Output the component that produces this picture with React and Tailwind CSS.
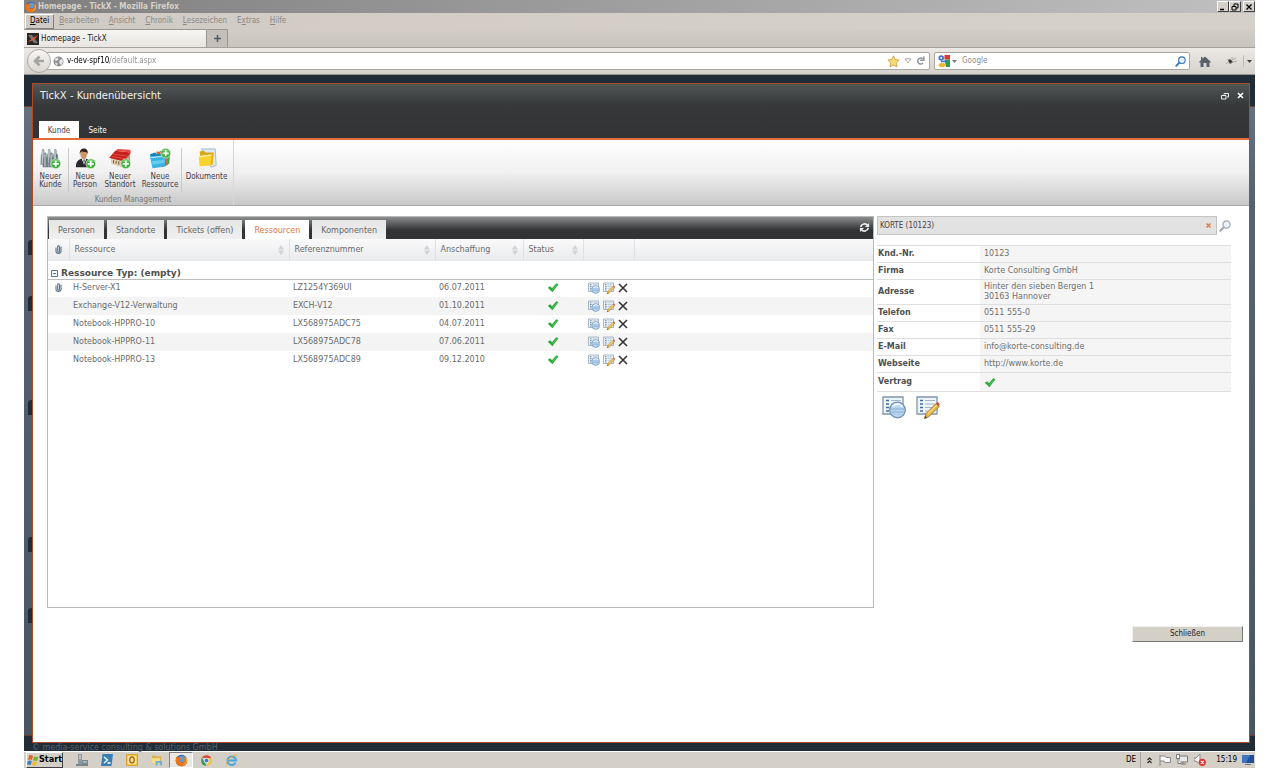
import { useState } from 'react';

const sans = "font-['DejaVu_Sans',sans-serif]";
const condensed = "font-['DejaVu_Sans_Condensed','DejaVu_Sans',sans-serif]";

const menuItems = [
  ['', 'D', 'atei'],
  ['', 'B', 'earbeiten'],
  ['', 'A', 'nsicht'],
  ['', 'C', 'hronik'],
  ['', 'L', 'esezeichen'],
  ['E', 'x', 'tras'],
  ['', 'H', 'ilfe'],
];

const tabs = ['Personen', 'Standorte', 'Tickets (offen)', 'Ressourcen', 'Komponenten'];

const ressourcen = [
  { name: 'H-Server-X1', ref: 'LZ1254Y369UI', datum: '06.07.2011', anhang: true },
  { name: 'Exchange-V12-Verwaltung', ref: 'EXCH-V12', datum: '01.10.2011' },
  { name: 'Notebook-HPPRO-10', ref: 'LX568975ADC75', datum: '04.07.2011' },
  { name: 'Notebook-HPPRO-11', ref: 'LX568975ADC78', datum: '07.06.2011' },
  { name: 'Notebook-HPPRO-13', ref: 'LX568975ADC89', datum: '09.12.2010' },
];

const kunde = [
  ['Knd.-Nr.', '10123'],
  ['Firma', 'Korte Consulting GmbH'],
  ['Adresse', 'Hinter den sieben Bergen 1\n30163 Hannover'],
  ['Telefon', '0511 555-0'],
  ['Fax', '0511 555-29'],
  ['E-Mail', 'info@korte-consulting.de'],
  ['Webseite', 'http://www.korte.de'],
];

function Firefox({ className }) {
  return (
    <svg className={className} viewBox="0 0 16 16">
      <circle cx="8" cy="8" r="7" fill="#2a5ca8" />
      <circle cx="8.5" cy="6" r="4" fill="#5b9be0" />
      <path d="M1.5 3.5 3 4.6C4 3.4 5 3 6.3 3.2 5.4 4 5.6 4.8 6.8 5.2c1.2.3 1.6.8.2 1.6-1 .6-1.4 1.4-.6 2.5 1.4 1.8 4.6 1.2 5.2-1.2.4-2-.2-3.7-1.3-4.9 3 .5 4.5 2.6 4.7 5.2C15 12.2 12 15.3 8 15.3 3.8 15.3.8 12.3.8 8.5c0-2 .2-3.5.7-5z" fill="#e8741c" />
      <path d="M12 3c2.3 1.2 3.2 4 2.3 6.5-.9 2.5-3 4-5.5 4.2 3-1.2 4.8-3 4.8-6 0-1.8-.6-3.4-1.6-4.7z" fill="#f9c440" />
    </svg>
  );
}

function PlusBadge() {
  return (
    <g>
      <circle cx="18" cy="18" r="5.5" fill="#38ad38" stroke="#d6f0d0" strokeWidth=".8" />
      <path d="M14 16a4.5 4.5 0 0 1 8 0z" fill="#79d06f" />
      <path d="M18 14.5v7M14.5 18h7" stroke="#fff" strokeWidth="2" />
    </g>
  );
}

function KundeIcon() {
  return (
    <svg className="h-[21px] w-[21px]" viewBox="0 0 24 24">
      {[0, 7, 14].map((x) => (
        <g key={x} transform={`translate(${x} 0)`}>
          <path d="m1 8 1-2V2.5Q3.5-.5 5 2.5V6l1.5 2 1 11h-7z" fill="#87969b" />
          <path d="M3.2 2.5V18" stroke="#d3dde0" strokeWidth="1.2" />
          <path d="M5.2 7v11" stroke="#56656a" strokeWidth="1" />
        </g>
      ))}
      {[2.5, 9.5].map((x) => (
        <g key={x} transform={`translate(${x} 4)`}>
          <path d="m1 8 1-2V2.5Q3.5-.5 5 2.5V6l1.5 2 1 10h-7z" fill="#6f7e83" />
          <path d="M3.2 2.5V17" stroke="#cbd7da" strokeWidth="1.2" />
        </g>
      ))}
      <PlusBadge />
    </svg>
  );
}

function PersonIcon() {
  return (
    <svg className="h-[21px] w-[21px]" viewBox="0 0 24 24">
      <path d="M1 22c0-6 2-8.5 7-10h4c5 1.5 7.5 4 7.5 10z" fill="#25282c" />
      <path d="m7.5 12 2.8 7 2.7-7z" fill="#f2f2f2" />
      <path d="m9.5 13 .8 6 .9-6z" fill="#444" />
      <ellipse cx="10" cy="7" rx="3.8" ry="5.5" fill="#cf9766" />
      <path d="M5.5 7C5 2.5 7.5.5 10.5.5S15 3 14.5 7C13.5 4 11 5 8 4 6.5 4.3 6 5.5 5.5 7z" fill="#33211a" />
      <PlusBadge />
    </svg>
  );
}

function StandortIcon() {
  return (
    <svg className="h-[21px] w-[23px]" viewBox="0 0 26 24">
      <path d="m2 11 1 7 13 4 8-7V7z" fill="#b9a183" />
      <path d="m2 12 14 3v7L3 18z" fill="#e3d0b2" />
      <path d="M5 14v3.5m3-3v3.5m3-3v4m3-4v4" stroke="#79603f" strokeWidth="1.2" />
      <path d="M0 11 7 3l18 2-8 10z" fill="#c91e1d" />
      <path d="m7 3 3-2 14 1 1 3z" fill="#e84a42" />
      <path d="m5 7 17 2.5M3 9.5 19 12.5" stroke="#e2524a" strokeWidth="1" />
      <g transform="translate(1 0)"><PlusBadge /></g>
    </svg>
  );
}

function RessourceIcon() {
  return (
    <svg className="h-[21px] w-[22px]" viewBox="0 0 25 24">
      <path d="m12 3 12 2-1 13-8 4z" fill="#3fa255" />
      <path d="m8 4 13 1 .5 14-7 3z" fill="#dd6b33" />
      <path d="m1 7 6-2 2 2 10-1 .5 14L5 22.5z" fill="#1686bc" />
      <path d="m1 10 18-2-.5 13L4 23z" fill="#38b3e2" />
      <path d="m2 11 16-1.8" stroke="#b4eaff" strokeWidth="1.2" />
      <path d="m3 15 15-2-.3 4L4 19z" fill="#62cdf0" />
      <g transform="translate(1 -12)"><PlusBadge /></g>
    </svg>
  );
}

function DokumenteIcon() {
  return (
    <svg className="h-[21px] w-[20px]" viewBox="0 0 23 24">
      <path d="M5 1h16l1 19-6 2z" fill="#dce8f2" stroke="#9fb6c8" />
      <path d="m3 4 5-1 2 2h9l-1 14-13 1z" fill="#d8a61c" />
      <path d="m2 9 15-2-1 13-13 1z" fill="#fbd12f" />
      <path d="m2.5 10 14-2" stroke="#fff1a3" strokeWidth="1.5" />
      <path d="m17 7 2-1-1 13-2 1z" fill="#e7b31f" />
    </svg>
  );
}

function Haken() {
  return (
    <svg className="inline-block h-[11px] w-[12px]" viewBox="0 0 12 11" role="img" aria-label="Ja">
      <path d="m.8 5.8 2.4-1.6L5 6.2 9.3 1.3l2.2 1L5.4 10.2z" fill="#2aa838" />
      <path d="M5 8.3 10.3 2.5" stroke="#62cf68" strokeWidth=".8" />
    </svg>
  );
}

function Clip() {
  return (
    <svg className="inline-block h-[9px] w-[7px]" viewBox="0 0 7 9">
      <path d="M1 2.5v4C1 9 6 9 6 6.5V1.5M4.5 2v4.2c0 1-1.8 1-1.8 0V1.8C2.7.6 4.5.6 4.5 1.8" fill="none" stroke="#59718c" strokeWidth="1.1" />
    </svg>
  );
}

function ListeAnsicht({ className }) {
  return (
    <svg className={className} viewBox="0 0 24 24">
      <path d="M1 2h20v17H1z" fill="#eef5fb" stroke="#8095aa" strokeWidth="1.3" />
      <path d="M4 5.5h3M4 9h3M4 12.5h3M4 16h3" stroke="#416d9d" strokeWidth="1.6" />
      <path d="M9 5.5h10M9 9h10M9 12.5h4" stroke="#a4b5c6" strokeWidth="1.2" />
      <circle cx="15.5" cy="15" r="7.8" fill="#b4d3ef" fillOpacity=".94" stroke="#7391b2" strokeWidth="1.3" />
      <path d="M9 14h13M9.5 17h12" stroke="#86aed4" strokeWidth="1.2" />
      <path d="M10.5 11.5q5-5 10 0" fill="none" stroke="#f3faff" strokeWidth="1.8" />
    </svg>
  );
}

function ListeBearbeiten({ className }) {
  return (
    <svg className={className} viewBox="0 0 24 24">
      <path d="M1 2h20v17H1z" fill="#eef5fb" stroke="#8095aa" strokeWidth="1.3" />
      <path d="M4 5.5h3M4 9h3M4 12.5h3M4 16h3" stroke="#416d9d" strokeWidth="1.6" />
      <path d="M9 5.5h10M9 9h10M9 12.5h7M9 16h3" stroke="#a4b5c6" strokeWidth="1.2" />
      <path d="m8.5 23.5 1.5-5L20 8.5l3.3 3L13 21.5z" fill="#e8b94b" stroke="#9d762f" strokeWidth=".9" />
      <path d="m20 8.5 1.2-1.2q2-.5 2.5 2.5l-1 1.5z" fill="#c94b46" />
      <path d="m8.5 23.5.7-2.5 1.8 1.8z" fill="#333" />
      <path d="m12 18.5 8.5-8" stroke="#fff0aa" />
    </svg>
  );
}

function Sort() {
  return (
    <svg className="h-[10px] w-[6px] shrink-0" viewBox="0 0 6 10">
      <path d="m3 0 3 4.5H0zM0 5.5h6L3 10z" fill="#d2d3d5" />
    </svg>
  );
}

function Lupe({ className, color }) {
  return (
    <svg className={className} viewBox="0 0 12 12" fill="none" stroke={color}>
      <circle cx="7.5" cy="4.5" r="3.6" strokeWidth="1.2" fill="#eaf1fa" />
      <path d="M4.8 7.2 1.3 10.7" strokeWidth="2" strokeLinecap="round" />
    </svg>
  );
}

function WinButton({ label, children }) {
  return (
    <button aria-label={label} className="flex h-[11px] w-[12px] items-center justify-center border border-t-white border-l-white border-r-[#404040] border-b-[#404040] bg-[#d4d0c8]">
      <svg className="h-[8px] w-[8px] shrink-0" viewBox="0 0 8 8" fill="none" stroke="#000">{children}</svg>
    </button>
  );
}

function BrowserChrome() {
  return (
    <header className={`${condensed} shrink-0 text-[8px] leading-[10px]`}>
      <div className="flex h-[13px] items-center bg-linear-to-r from-[#808080] to-[#c0c0c0] pl-px">
        <Firefox className="h-[12px] w-[12px]" />
        <span className="ml-px flex-1 font-bold text-[#d6d2ca]">Homepage - TickX - Mozilla Firefox</span>
        <WinButton label="Minimieren"><path d="M1 6.5h4" strokeWidth="1.5" /></WinButton>
        <WinButton label="Wiederherstellen"><path d="M3 3V1h4v4H5M1 3.5h4V7H1z" /></WinButton>
        <span className="w-[2px]" />
        <WinButton label="Schließen"><path d="m1.5 1.5 5 5m0-5-5 5" strokeWidth="1.3" /></WinButton>
      </div>
      <nav className="flex h-[16px] items-center bg-linear-to-r from-[#d1cbc5] to-[#d5d1c8] pl-px">
        {menuItems.map(([pre, key, post], i) => (
          <button key={key} className={i === 0 ? 'h-[15px] border border-t-white border-l-white border-r-[#808080] border-b-[#808080] px-1 text-black' : 'px-[5px] text-[#8b8782]'}>
            {pre}<u>{key}</u>{post}
          </button>
        ))}
      </nav>
      <div className="flex h-[19px] items-end border-b border-[#a5a29c] bg-linear-to-b from-[#d2cdc6] to-[#c9c5be]">
        <button className="flex h-[18px] w-[183px] items-center gap-[2px] rounded-tr-[2px] border-t border-r border-[#98958f] bg-linear-to-b from-[#f7f6f4] to-[#e8e5e2] pl-[3px] text-[#222]">
          <svg className="h-[12px] w-[12px]" viewBox="0 0 12 12">
            <path d="M0 0h12v12H0z" fill="#292624" />
            <path d="M1 2h4l6 8H7zM10 1 1 11l4-5z" fill="#747474" />
            <path d="M1 9 6 5 11 2 7 7z" fill="#e15c2f" />
          </svg>
          Homepage - TickX
        </button>
        <button aria-label="Neuer Tab" className="flex h-[18px] w-[21px] items-center justify-center rounded-tr-[2px] border-t border-r border-[#98958f] bg-[#c4c0b9]">
          <svg className="h-[9px] w-[9px]" viewBox="0 0 9 9"><path d="M4.5 1v7M1 4.5h7" stroke="#4e5a65" strokeWidth="1.5" /></svg>
        </button>
      </div>
      <div className="flex h-[27px] items-center border-b border-[#989590] bg-linear-to-b from-[#ece9e6] to-[#d5d1cb] pr-[3px] pl-[3px]">
        <button aria-label="Zurück" className="z-10 flex h-[24px] w-[24px] shrink-0 items-center justify-center rounded-full border border-[#aba8a4] bg-linear-to-b from-[#f7f6f4] to-[#dad7d2]">
          <svg className="h-[12px] w-[12px]" viewBox="0 0 12 12"><path d="M6.5 1.5 2 6l4.5 4.5M2.5 6H11" fill="none" stroke="#a5a4a2" strokeWidth="2.5" /></svg>
        </button>
        <div className="-ml-[5px] flex h-[18px] flex-1 items-center rounded-[2px] border border-[#a9a6a2] bg-white pr-1 pl-[6px]">
          <svg className="h-[11px] w-[11px]" viewBox="0 0 12 12">
            <circle cx="6" cy="6" r="5.5" fill="#929292" />
            <path d="m2 3 3-1.5 1 2-2 2-2-1zM7 5l3-2 1 3-2 4-2-2zM2 7l3 1-1 3z" fill="#e6e6e6" />
          </svg>
          {/* Hostname dunkel, Pfad grau */}
          <input
            aria-label="Adresse"
            defaultValue="v-dev-spf10/default.aspx"
            className="ml-[3px] min-w-0 flex-1 bg-linear-to-r from-black from-[43px] to-[#8c8c8c] to-[43px] bg-clip-text text-transparent outline-none"
          />
          <button aria-label="Lesezeichen">
            <svg className="h-[13px] w-[13px]" viewBox="0 0 24 24"><path d="m12 1.5 3.2 6.9 7.3.9-5.4 5.2 1.4 7.5-6.5-3.6L5.5 22l1.4-7.5L1.5 9.3l7.3-.9z" fill="#fbdc72" stroke="#c89a3c" strokeWidth="1.5" /></svg>
          </button>
          <svg className="mx-[4px] h-[6px] w-[8px]" viewBox="0 0 8 6"><path d="M1 .8h6L4 5z" fill="none" stroke="#aaa" /></svg>
          <button aria-label="Neu laden">
            <svg className="h-[10px] w-[9px]" viewBox="0 0 12 12"><path d="M9.5 8.5A4 4 0 1 1 9 3M10.5 0v5h-5" fill="none" stroke="#8e959d" strokeWidth="2" /></svg>
          </button>
        </div>
        <div className="ml-[4px] flex h-[18px] w-[256px] items-center rounded-[2px] border border-[#a9a6a2] bg-white pr-[3px] pl-[3px]">
          <svg className="h-[12px] w-[12px] shrink-0" viewBox="0 0 12 12">
            <path d="M6.5 0H12v4.500H6.5z" fill="#e1352d" />
            <path d="M6.5 4.5H12V12H8z" fill="#30985a" />
            <circle cx="3.2" cy="3" r="2.8" fill="#3975d1" />
            <circle cx="3.2" cy="3" r="1" fill="#fff" />
            <ellipse cx="4" cy="10" rx="3.5" ry="2" fill="#edb82a" />
            <path d="M3 6.5h4" stroke="#3975d1" strokeWidth="1.5" />
          </svg>
          <svg className="mx-[2px] h-[3px] w-[5px]" viewBox="0 0 5 3"><path d="M0 0h5L2.5 3z" fill="#777" /></svg>
          <input aria-label="Google-Suche" placeholder="Google" className="ml-[3px] min-w-0 flex-1 outline-none placeholder:text-[#8c8c8c]" />
          <button aria-label="Suchen"><Lupe className="h-[11px] w-[11px]" color="#3774bc" /></button>
        </div>
        <button aria-label="Startseite" className="ml-[9px]">
          <svg className="h-[11px] w-[12px]" viewBox="0 0 12 11"><path d="m6 .5 6 5.5-1 .8L10.5 6v5h-3V7h-3v4h-3V6L1 6.800 0 6l2-2V1h1.500v1.700z" fill="#59626b" /></svg>
        </button>
        <button aria-label="Erweiterung" className="ml-[15px]">
          <svg className="h-[10px] w-[12px]" viewBox="0 0 12 10"><path d="M2 3.5 5 4l2 2-3 2-1-2zM6 4l4-2M7 6l4-1M2 6 0 8M6 3V1" fill="#444" stroke="#999" strokeWidth=".8" /><circle cx="4" cy="5" r="1.5" fill="#333" /></svg>
        </button>
        <span className="ml-[5px] h-[12px] w-px bg-[#c1beb9]" />
        <svg className="ml-[3px] h-[3px] w-[5px]" viewBox="0 0 5 3"><path d="M0 0h5L2.5 3z" fill="#444" /></svg>
      </div>
    </header>
  );
}

function RibbonButton({ icon, lines, className }) {
  return (
    <button className={`${className} flex flex-col items-center`}>
      {icon}
      {lines.map((l, i) => <span key={l} className={i === 0 ? 'mt-[4px]' : ''}>{l}</span>)}
    </button>
  );
}

function DialogHeader() {
  return (
    <div className="shrink-0">
      <div className="flex h-[54px] flex-col justify-between bg-linear-to-b from-[#525657] via-[#363839] via-40% to-[#323335]">
        <div className="flex items-center pt-[5px] pr-[5px] pl-[7px]">
          <h1 className="flex-1 text-[10px] leading-[13px] text-[#f0f0f0]">TickX - Kundenübersicht</h1>
          <button aria-label="Wiederherstellen" className="mr-[8px]">
            <svg className="h-[8px] w-[8px]" viewBox="0 0 8 8" fill="none" stroke="#eee"><path d="M3 2.5v-1h4.5v3.5H6M.5 3.5H5V7H.5z" /></svg>
          </button>
          <button aria-label="Dialog schließen">
            <svg className="h-[7px] w-[7px]" viewBox="0 0 7 7"><path d="m1 1 5 5m0-5L1 6" stroke="#fff" strokeWidth="1.6" /></svg>
          </button>
        </div>
        <div className={`${condensed} flex text-[8px]`}>
          <button className="ml-[6px] h-[17px] w-[40px] bg-white pt-[2px] text-[#433d48]">Kunde</button>
          <button className="h-[17px] w-[37px] pt-[2px] text-white">Seite</button>
        </div>
      </div>
      <div className={`${condensed} flex h-[68px] border-t-2 border-b border-t-[#e16c38] border-b-[#a9a9a9] bg-linear-to-b from-white via-[#f0f0f0] via-50% to-[#c9c9c9] text-[8px] leading-[8px] text-[#443d49]`}>
        <div className="flex w-[201px] flex-col border-r border-[#d8d8d8] pt-[8px]">
          <div className="flex h-[47px]">
            <RibbonButton className="w-[35px]" icon={<KundeIcon />} lines={['Neuer', 'Kunde']} />
            <span className="h-[44px] w-px bg-[#c9c9c9]" />
            <RibbonButton className="w-[32px]" icon={<PersonIcon />} lines={['Neue', 'Person']} />
            <RibbonButton className="w-[38px]" icon={<StandortIcon />} lines={['Neuer', 'Standort']} />
            <RibbonButton className="w-[42px]" icon={<RessourceIcon />} lines={['Neue', 'Ressource']} />
            <span className="h-[44px] w-px bg-[#c9c9c9]" />
            <RibbonButton className="w-[49px]" icon={<DokumenteIcon />} lines={['Dokumente']} />
          </div>
          <p className="text-center leading-[10px] text-[#777]">Kunden Management</p>
        </div>
      </div>
    </div>
  );
}

function Kopf({ children }) {
  return (
    <th className="border-r border-[#dfe0e2] pr-[5px] pl-[5px] font-normal">
      <div className="flex items-center justify-between">{children}<Sort /></div>
    </th>
  );
}

function RessourcenPanel() {
  const [active, setActive] = useState('Ressourcen');
  return (
    <section className="flex min-w-0 flex-1 flex-col border border-[#b9b9b9]">
      <div className="flex h-[22px] shrink-0 items-end bg-linear-to-b from-[#8d8f8f] to-[#323335] to-60% pl-px">
        {tabs.map((tab) => (
          <button key={tab} onClick={() => setActive(tab)} className={`mr-[3px] h-[19px] px-[9px] pt-[3px] text-[8px] ${tab === active ? 'bg-white text-[#e0763f]' : 'bg-linear-to-b from-[#e5e5e5] to-[#f0f0f0] text-[#666]'}`}>
            {tab}
          </button>
        ))}
        <button aria-label="Aktualisieren" className="mr-[3px] mb-[6px] ml-auto">
          <svg className="h-[11px] w-[11px]" viewBox="0 0 12 12"><path d="M1.8 5.5A4.300 4.300 0 0 1 9.500 3.800M10.200 6.500A4.300 4.300 0 0 1 2.500 8.200" fill="none" stroke="#eee" strokeWidth="1.8" /><path d="M11 1v4.500H6.500zM1 11V6.500h4.500z" fill="#eee" /></svg>
        </button>
      </div>
      <table className="w-full table-fixed border-collapse text-left text-[8px] text-[#6b6b6b]">
        <colgroup>
          <col className="w-[21px]" />
          <col className="w-[220px]" />
          <col className="w-[146px]" />
          <col className="w-[88px]" />
          <col className="w-[60px]" />
          <col className="w-[51px]" />
          <col />
        </colgroup>
        <thead>
          <tr className="h-[22px] bg-linear-to-b from-[#fafafb] to-[#e9eaec]">
            <th className="border-r border-[#dfe0e2] text-center"><Clip /></th>
            <Kopf>Ressource</Kopf>
            <Kopf>Referenznummer</Kopf>
            <Kopf>Anschaffung</Kopf>
            <Kopf>Status</Kopf>
            <th className="border-r border-[#dfe0e2]" />
            <th />
          </tr>
        </thead>
        <tbody>
          <tr className="h-[18px] border-b border-[#bdbdbd]">
            <td colSpan="7" className="pt-[7px] pl-[3px] text-[9px] leading-[10px] font-bold text-[#505050]">
              <div className="flex items-center gap-[3px]">
                <button aria-label="Gruppe einklappen">
                  <svg className="block h-[7px] w-[7px]" viewBox="0 0 7 7"><path d="M.5.5h6v6h-6zM2 3.5h3" fill="#f4f8fc" stroke="#5a7395" /></svg>
                </button>
                Ressource Typ: (empty)
              </div>
            </td>
          </tr>
          {ressourcen.map((r) => (
            <tr key={r.name} className="h-[18px] even:bg-white odd:bg-[#f4f4f4]">
              <td className="text-center">{r.anhang && <Clip />}</td>
              <td className="pl-[4px]">{r.name}</td>
              <td className="pl-[4px]">{r.ref}</td>
              <td className="pl-[4px]">{r.datum}</td>
              <td className="text-center"><Haken /></td>
              <td className="pl-[5px]">
                <div className="flex items-center gap-[3px]">
                  <button aria-label="Anzeigen"><ListeAnsicht className="block h-[12px] w-[12px]" /></button>
                  <button aria-label="Bearbeiten"><ListeBearbeiten className="block h-[12px] w-[12px]" /></button>
                  <button aria-label="Löschen">
                    <svg className="block h-[10px] w-[10px]" viewBox="0 0 10 10"><path d="m1 1 8 8m0-8-8 8" stroke="#333" strokeWidth="1.6" /></svg>
                  </button>
                </div>
              </td>
              <td />
            </tr>
          ))}
        </tbody>
      </table>
    </section>
  );
}

function KundenDetails() {
  return (
    <aside className="ml-[3px] w-[354px] shrink-0">
      <div className="flex items-center">
        <div className="flex h-[19px] flex-1 items-center border border-[#c4c4c4] bg-[#e2e2e2] pr-[5px] pl-[2px]">
          <input aria-label="Kunde" defaultValue="KORTE (10123)" className={`${condensed} min-w-0 flex-1 text-[8px] text-[#444] outline-none`} />
          <button aria-label="Leeren">
            <svg className="h-[5px] w-[5px]" viewBox="0 0 5 5"><path d="m.5.5 4 4m0-4-4 4" stroke="#e8743b" strokeWidth="1.3" /></svg>
          </button>
        </div>
        <button aria-label="Kunde suchen" className="ml-[2px]"><Lupe className="h-[12px] w-[12px]" color="#a2a6b0" /></button>
      </div>
      <table className="mt-[10px] w-full table-fixed border-collapse text-left text-[8px] leading-[10px] text-[#707070]">
        <colgroup>
          <col className="w-[103px]" />
          <col />
        </colgroup>
        <tbody>
          {kunde.map(([label, wert]) => (
            <tr key={label} className="h-[17px] border-y border-[#dedede]">
              <th className="pl-px font-bold text-[#505050]">{label}</th>
              <td className="bg-[#f5f5f5] py-[2px] pl-[4px] whitespace-pre-line">{wert}</td>
            </tr>
          ))}
          <tr className="h-[19px] border-y border-[#dedede]">
            <th className="pl-px font-bold text-[#505050]">Vertrag</th>
            <td className="bg-[#f5f5f5] pl-[4px]"><Haken className="block" /></td>
          </tr>
        </tbody>
      </table>
      <div className="mt-[3px] flex gap-[10px] pl-[5px]">
        <button aria-label="Kunde anzeigen"><ListeAnsicht className="h-[24px] w-[24px]" /></button>
        <button aria-label="Kunde bearbeiten"><ListeBearbeiten className="h-[24px] w-[24px]" /></button>
      </div>
    </aside>
  );
}

function Taskbar() {
  return (
    <footer className={`${condensed} flex h-[17px] shrink-0 items-center border-t border-white bg-[#d4d0c8] text-[8px] text-black`}>
      <button className="ml-[2px] flex h-[16px] items-center border border-t-white border-l-white border-r-[#404040] border-b-[#404040] text-[9px] font-bold">
        <svg className="h-[12px] w-[12px]" viewBox="0 0 12 12">
          <path d="M2 1.5Q4 .5 6 2L5 6Q3 5 1 6z" fill="#e76126" />
          <path d="M7 2.3q2 1.3 4.5.2L10.3 6.5Q8 7.5 6 6.3z" fill="#79b23a" />
          <path d="M.8 7q2-1 4 0l-1 4Q2 10 0 11z" fill="#3c7cc4" />
          <path d="M5.8 7.3q2 1.2 4.2.2L9 11.3q-2 1-4.2-.2z" fill="#f1be2e" />
        </svg>
        Start
      </button>
      <button aria-label="Server-Manager" className="ml-[13px]">
        <svg className="h-[13px] w-[12px]" viewBox="0 0 12 13"><path d="M2 0h4v10H2z" fill="#8e999f" /><path d="M3 2h2M3 4h2" stroke="#e3e8eb" /><path d="M0 10h8v2H0zM6 6h6v6H6z" fill="#77858d" /><path d="M7 8h4" stroke="#dae1e4" /></svg>
      </button>
      <button aria-label="PowerShell" className="ml-[13px]">
        <svg className="h-[12px] w-[12px]" viewBox="0 0 12 12"><path d="M1.5 0H12l-1.5 12H0z" fill="#387fb9" /><path d="m3 3 3.5 3L3 9M6.5 9h3" fill="none" stroke="#fff" strokeWidth="1.3" /></svg>
      </button>
      <button aria-label="Outlook" className="ml-[13px]">
        <svg className="h-[12px] w-[12px]" viewBox="0 0 13 13"><path d="M.5.5h12v12H.5z" fill="#f6c648" stroke="#d99c20" /><path d="M2 2h9v9H2z" fill="#fae59b" /><ellipse cx="6.5" cy="6.5" rx="2.4" ry="3.3" fill="none" stroke="#a86c18" strokeWidth="1.5" /></svg>
      </button>
      <button aria-label="Explorer" className="ml-[13px]">
        <svg className="h-[12px] w-[12px]" viewBox="0 0 13 12"><path d="M1 1h4l1 1h5v8H2z" fill="#dfb34b" /><path d="M0 4h10l-1 6H2z" fill="#f8de86" /><path d="M5 7h7v5h-2V9H7v3H5z" fill="#6aaed7" /></svg>
      </button>
      <button aria-label="Firefox" className="ml-[6px] flex h-[16px] w-[24px] items-center justify-center border border-t-[#808080] border-l-[#808080] border-r-white border-b-white bg-[#ebe8e3]">
        <Firefox className="h-[13px] w-[13px]" />
      </button>
      <button aria-label="Chrome" className="ml-[8px]">
        <svg className="h-[11px] w-[11px]" viewBox="0 0 12 12">
          <path d="M1 3a6 6 0 0 1 10.3.3H6z" fill="#dc4437" />
          <path d="M1 3 4 8l2 4A6 6 0 0 1 1 3z" fill="#35985a" />
          <path d="M11.3 3.3A6 6 0 0 1 6 12l3-6-3-2.7z" fill="#f2c43a" />
          <circle cx="6" cy="6" r="2.5" fill="#3d79d3" stroke="#fff" strokeWidth=".8" />
        </svg>
      </button>
      <button aria-label="Internet Explorer" className="ml-[13px]">
        <svg className="h-[13px] w-[13px]" viewBox="0 0 13 13" fill="none"><path d="M10.5 8.8A4.3 4.3 0 1 1 11 6.5H3" stroke="#46a5dc" strokeWidth="2" /><path d="M1.5 11.5C-1 9 8-1 12 1.5" stroke="#eab642" strokeWidth="1" /></svg>
      </button>
      <span className="ml-auto">DE</span>
      <div className="ml-[4px] flex h-[16px] w-[115px] items-center border-l border-[#a5a29b] pl-[6px]">
        <svg className="h-[7px] w-[5px]" viewBox="0 0 5 7"><path d="m.5 3 2-2 2 2m-4 3 2-2 2 2" fill="none" stroke="#222" strokeWidth="1.1" /></svg>
        <svg className="ml-[7px] h-[11px] w-[12px]" viewBox="0 0 12 11"><path d="M1 0v11M1 1h5l1 1.5h4.5v5H6L5 6H1" fill="#f8f8f8" stroke="#888" /></svg>
        <svg className="ml-[5px] h-[12px] w-[12px]" viewBox="0 0 12 12"><path d="M3 2h8.5v6H3zM5 10h5M7 8v2" fill="#e8e8e8" stroke="#777" /><path d="M.5.5h3v4h-3zM2 4.5v5h3" fill="#fff" stroke="#777" /></svg>
        <svg className="ml-[6px] h-[12px] w-[12px]" viewBox="0 0 12 12"><path d="M0 4h2l4-4v10L2 7H0z" fill="#f8f8f8" stroke="#888" /><circle cx="8.3" cy="8.3" r="3.6" fill="#d9372e" /><path d="m6.8 6.8 3 3m0-3-3 3" stroke="#fff" strokeWidth="1.2" /></svg>
        <time className="mr-[5px] ml-auto">15:19</time>
        <svg className="mr-px h-[10px] w-[12px]" viewBox="0 0 12 10"><path d="M0 0h12v8H0z" fill="#214e99" /><path d="M0 0h8L4 8H0z" fill="#4277bf" /><path d="M3 9.5h6" stroke="#777" /></svg>
      </div>
    </footer>
  );
}

export default function App() {
  return (
    <div className={`${sans} h-screen bg-white pr-[25px] pl-[24px]`}>
      <div className="flex h-full flex-col overflow-hidden">
        <BrowserChrome />
        <main className="relative flex min-h-0 flex-1 flex-col bg-[#212c39]">
          {/* abgedunkelte Seite hinter dem Dialog */}
          <div className="absolute inset-x-0 top-[31px] bottom-[15px] border-y border-[#713d2b] bg-linear-to-b from-[#667180] via-[#566273] via-15% to-[#485664]">
            {[133, 189, 293, 430, 501].map((y) => (
              <span key={y} className="absolute left-[4px] h-[15px] w-[4px] rounded-tl-[3px] bg-[#222c38]" style={{ top: y }} />
            ))}
          </div>
          <p className="absolute bottom-[-2px] left-[8px] text-[8px] leading-[10px] text-[#56606a]">© media-service consulting &amp; solutions GmbH</p>
          <div role="dialog" aria-label="Kundenübersicht" className="relative mt-[8px] mr-[5px] mb-[8px] ml-[8px] flex min-h-0 flex-1 flex-col border border-[#a84c2a] bg-white">
            <DialogHeader />
            <div className="mt-[10px] flex h-[392px] shrink-0 pr-[18px] pl-[14px]">
              <RessourcenPanel />
              <KundenDetails />
            </div>
            <button className={`${condensed} mt-[18px] mr-[6px] h-[16px] w-[111px] self-end border border-t-[#f3f1ed] border-l-[#f3f1ed] border-r-[#777] border-b-[#777] bg-[#d4d0c8] text-[8px] text-[#222]`}>
              Schließen
            </button>
          </div>
        </main>
        <Taskbar />
      </div>
    </div>
  );
}
